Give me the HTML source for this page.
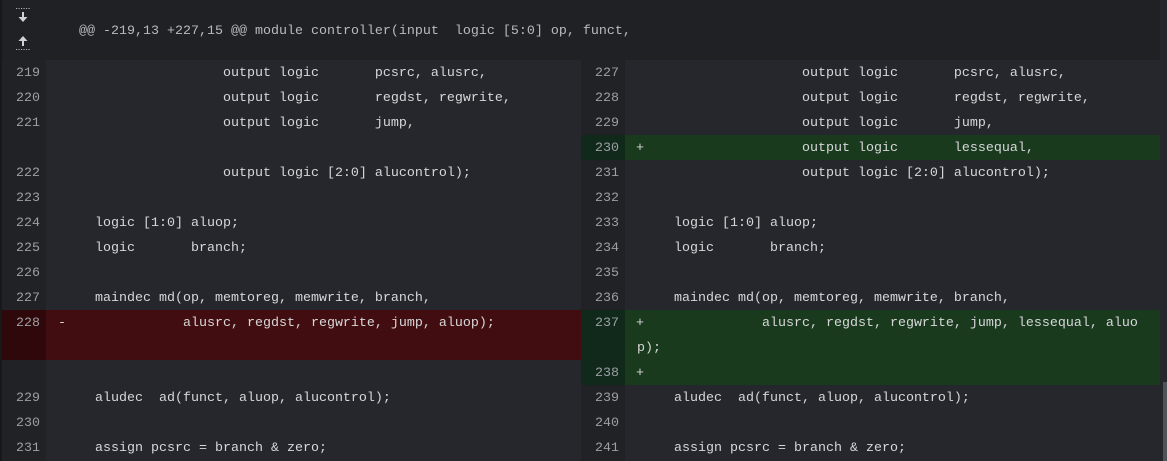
<!DOCTYPE html><html><head><style>
*{margin:0;padding:0;box-sizing:border-box}
body{width:1167px;height:461px;background:#25272c;position:relative;overflow:hidden;font-family:"Liberation Mono",monospace;font-size:13.33px;color:#d6d7d9}
.a{position:absolute}
.hdr{left:0;top:0;width:1160px;height:60px;background:#1f2125}
.g{background:#202226}
.n{position:absolute;width:40px;text-align:right;color:#9c9fa4;line-height:25px}
.t{position:absolute;white-space:pre;line-height:25px}
</style></head><body>
<div class="a hdr"></div>
<div class="a" style="left:0;top:0;width:2px;height:461px;background:#17181b"></div>
<div class="a g" style="left:2px;top:60px;width:44px;height:401px"></div>
<div class="a g" style="left:581px;top:60px;width:44px;height:401px"></div>
<div class="a" style="left:1160px;top:0;width:7px;height:461px;background:#25272c"></div>
<div class="a" style="left:1163px;top:382px;width:4px;height:79px;background:#50545a"></div>
<svg class="a" style="left:14px;top:6px" width="20" height="46" viewBox="0 0 20 46">
<g fill="#a8abb0"><rect x="2" y="2" width="1.2" height="1"/><rect x="4.5" y="2" width="1.2" height="1"/><rect x="7" y="2" width="1.2" height="1"/><rect x="9.5" y="2" width="1.2" height="1"/><rect x="12" y="2" width="1.2" height="1"/><rect x="14.5" y="2" width="1.2" height="1"/>
<rect x="2" y="43" width="1.2" height="1"/><rect x="4.5" y="43" width="1.2" height="1"/><rect x="7" y="43" width="1.2" height="1"/><rect x="9.5" y="43" width="1.2" height="1"/><rect x="12" y="43" width="1.2" height="1"/><rect x="14.5" y="43" width="1.2" height="1"/></g>
<g fill="#d0d2d5"><rect x="8" y="6" width="2" height="6"/><path d="M4.5 11h9L9 16z"/><rect x="8" y="34" width="2" height="6"/><path d="M4.5 35h9L9 30z"/></g>
</svg>
<div class="t" style="left:79px;top:19px;color:#b8babd">@@ -219,13 +227,15 @@ module controller(input  logic [5:0] op, funct,</div>
<div class="a" style="left:2px;top:310px;width:44px;height:50px;background:#2e080a"></div>
<div class="a" style="left:46px;top:310px;width:535px;height:50px;background:#420d10"></div>
<div class="a" style="left:581px;top:135px;width:44px;height:25px;background:#11291a"></div>
<div class="a" style="left:625px;top:135px;width:535px;height:25px;background:#1a3a1e"></div>
<div class="a" style="left:581px;top:310px;width:44px;height:75px;background:#11291a"></div>
<div class="a" style="left:625px;top:310px;width:535px;height:75px;background:#1a3a1e"></div>
<div class="n" style="left:0;top:61px">219<br>220<br>221<br><br>222<br>223<br>224<br>225<br>226<br>227<br>228<br><br><br>229<br>230<br>231</div>
<div class="t" style="left:63px;top:61px">                    output logic       pcsrc, alusrc,
                    output logic       regdst, regwrite,
                    output logic       jump,

                    output logic [2:0] alucontrol);

    logic [1:0] aluop;
    logic       branch;

    maindec md(op, memtoreg, memwrite, branch,
               alusrc, regdst, regwrite, jump, aluop);


    aludec  ad(funct, aluop, alucontrol);

    assign pcsrc = branch &amp; zero;</div>
<div class="t" style="left:58px;top:311px">-</div>
<div class="n" style="left:579px;top:61px">227<br>228<br>229<br>230<br>231<br>232<br>233<br>234<br>235<br>236<br>237<br><br>238<br>239<br>240<br>241</div>
<div class="t" style="left:642px;top:61px">                    output logic       pcsrc, alusrc,
                    output logic       regdst, regwrite,
                    output logic       jump,
                    output logic       lessequal,
                    output logic [2:0] alucontrol);

    logic [1:0] aluop;
    logic       branch;

    maindec md(op, memtoreg, memwrite, branch,
               alusrc, regdst, regwrite, jump, lessequal, aluo

</div>
<div class="t" style="left:637px;top:336px">p);</div>
<div class="t" style="left:642px;top:386px">    aludec  ad(funct, aluop, alucontrol);

    assign pcsrc = branch &amp; zero;</div>
<div class="t" style="left:636px;top:136px">+</div>
<div class="t" style="left:636px;top:311px">+</div>
<div class="t" style="left:636px;top:361px">+</div>
</body></html>
